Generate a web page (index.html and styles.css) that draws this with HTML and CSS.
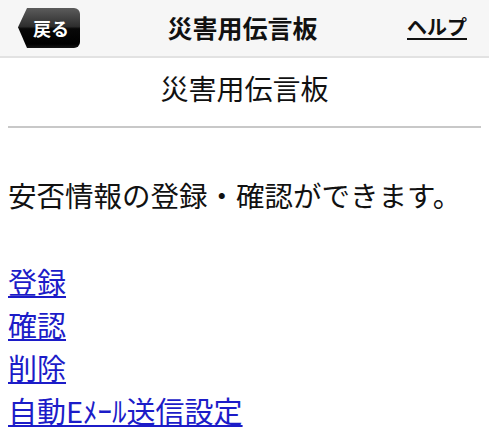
FILE: index.html
```html
<!DOCTYPE html>
<html lang="ja">
<head>
<meta charset="utf-8">
<title>災害用伝言板</title>
<link rel="stylesheet" href="styles.css">
</head>
<body>
<header class="topbar">
  <div class="left"><a class="back" href="#">戻る</a></div>
  <h1 class="title">災害用伝言板</h1>
  <div class="right"><a class="help" href="#">ヘルプ</a></div>
</header>
<main class="content">
  <h2 class="subtitle">災害用伝言板</h2>
  <hr class="rule">
  <p class="lead">安否情報の登録・確認ができます。</p>
  <ul class="links">
    <li><a href="#">登録</a></li>
    <li><a href="#">確認</a></li>
    <li><a href="#">削除</a></li>
    <li><a href="#">自動Eﾒｰﾙ送信設定</a></li>
  </ul>
</main>
</body>
</html>
```
FILE: styles.css
```css
html, body {
  margin: 0;
  padding: 0;
  background: #ffffff;
}
body {
  font-family: "Noto Sans CJK JP", "Noto Sans", sans-serif;
  color: #111111;
}
.topbar {
  height: 56px;
  background: #f6f6f6;
  border-bottom: 2px solid #e2e2e2;
  display: grid;
  grid-template-columns: 1fr auto 1fr;
  align-items: center;
  padding: 0 22px 0 18px;
}
.left {
  display: flex;
  justify-content: flex-start;
}
.right {
  display: flex;
  justify-content: flex-end;
}
.back {
  display: flex;
  align-items: center;
  height: 40px;
  width: 62px;
  box-sizing: border-box;
  padding-left: 15px;
  color: #ffffff;
  font-weight: 700;
  font-size: 18px;
  line-height: 1;
  text-decoration: none;
  background: linear-gradient(#5c5c5c 0%, #2e2e2e 46%, #080808 52%, #000000 90%, #151515 100%);
  border-radius: 0 6px 6px 0;
  clip-path: polygon(0 48%, 9px 0, 100% 0, 100% 100%, 9px 100%);
}
.title {
  margin: 0;
  font-size: 25px;
  font-weight: 700;
  line-height: 1;
  padding-bottom: 2px;
  color: #111111;
}
.help {
  color: #111111;
  font-size: 20px;
  font-weight: 700;
  line-height: 1;
  text-decoration: underline;
  text-underline-offset: 3px;
  padding-bottom: 2px;
}
.content {
  padding: 0 8px;
}
.subtitle {
  margin: 13px 0 0;
  text-align: center;
  font-size: 28px;
  font-weight: 400;
  line-height: 34px;
}
.rule {
  margin: 21px 0 0;
  border: 0;
  height: 2px;
  background: #c8c8c8;
}
.lead {
  margin: 50px 0 0;
  font-size: 28.5px;
  line-height: 34px;
}
.links {
  list-style: none;
  margin: 48px 0 0;
  padding: 0;
  font-size: 29px;
  line-height: 43px;
}
.links a {
  color: #1c1cc8;
  text-decoration: underline;
  text-decoration-thickness: 2px;
  text-underline-offset: 2px;
}
```
